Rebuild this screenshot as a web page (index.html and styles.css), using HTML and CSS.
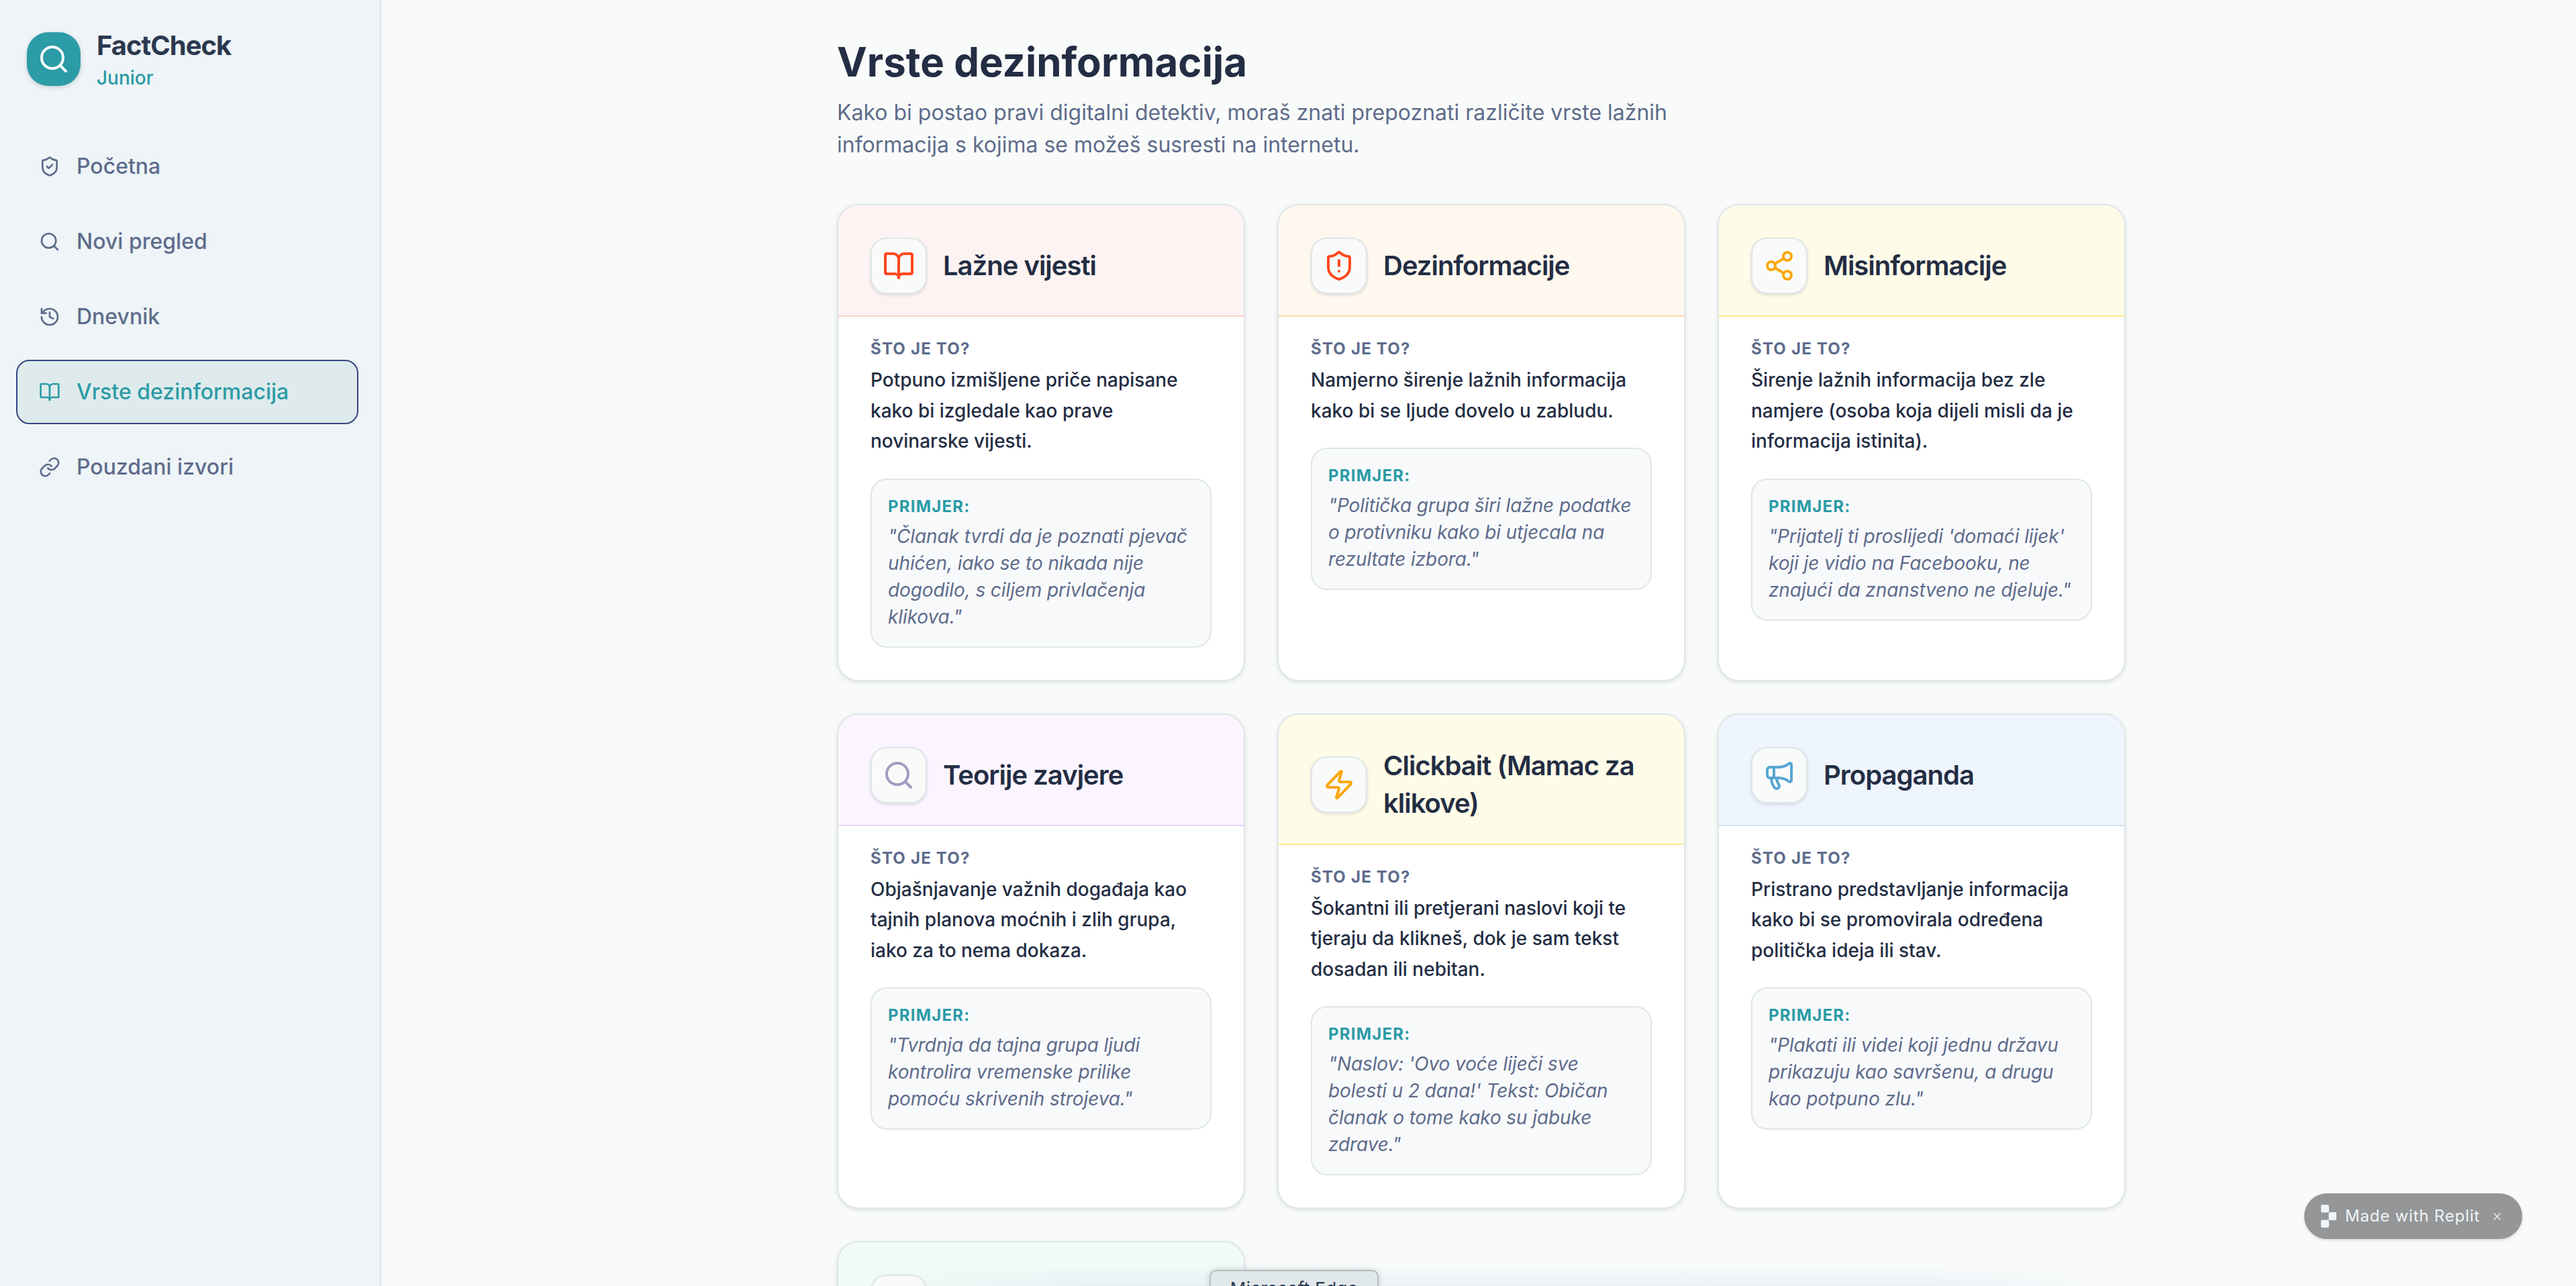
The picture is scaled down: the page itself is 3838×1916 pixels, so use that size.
FILE: index.html
```html
<!DOCTYPE html>
<html lang="hr">
<head>
    <meta charset="UTF-8">
    <meta name="viewport" content="width=device-width, initial-scale=1.0">
    <title>FactCheck Junior</title>

    <link rel="stylesheet" href="styles.css">
</head>
<body>
    <!-- icons -->
    <svg class="sprite">
        <symbol id="search" viewBox="0 0 24 24"><circle cx="11" cy="11" r="8"/><path d="m21 21-4.3-4.3"/></symbol>
        <symbol id="shield-check" viewBox="0 0 24 24"><path d="M20 13c0 5-3.5 7.5-7.66 8.95a1 1 0 0 1-.67-.01C7.5 20.5 4 18 4 13V6a1 1 0 0 1 1-1c2 0 4.5-1.2 6.24-2.72a1.17 1.17 0 0 1 1.52 0C14.51 3.81 17 5 19 5a1 1 0 0 1 1 1z"/><path d="m9 12 2 2 4-4"/></symbol>
        <symbol id="shield-alert" viewBox="0 0 24 24"><path d="M20 13c0 5-3.5 7.5-7.66 8.95a1 1 0 0 1-.67-.01C7.5 20.5 4 18 4 13V6a1 1 0 0 1 1-1c2 0 4.5-1.2 6.24-2.72a1.17 1.17 0 0 1 1.52 0C14.51 3.81 17 5 19 5a1 1 0 0 1 1 1z"/><path d="M12 8v4"/><path d="M12 16h.01"/></symbol>
        <symbol id="history" viewBox="0 0 24 24"><path d="M3 12a9 9 0 1 0 9-9 9.75 9.75 0 0 0-6.74 2.74L3 8"/><path d="M3 3v5h5"/><path d="M12 7v5l4 2"/></symbol>
        <symbol id="book" viewBox="0 0 24 24"><path d="M12 7v14"/><path d="M3 18a1 1 0 0 1-1-1V4a1 1 0 0 1 1-1h5a4 4 0 0 1 4 4 4 4 0 0 1 4-4h5a1 1 0 0 1 1 1v13a1 1 0 0 1-1 1h-6a3 3 0 0 0-3 3 3 3 0 0 0-3-3z"/></symbol>
        <symbol id="link" viewBox="0 0 24 24"><path d="M10 13a5 5 0 0 0 7.54.54l3-3a5 5 0 0 0-7.07-7.07l-1.72 1.71"/><path d="M14 11a5 5 0 0 0-7.54-.54l-3 3a5 5 0 0 0 7.07 7.07l1.71-1.71"/></symbol>
        <symbol id="share" viewBox="0 0 24 24"><circle cx="18" cy="5" r="3"/><circle cx="6" cy="12" r="3"/><circle cx="18" cy="19" r="3"/><path d="m8.59 13.51 6.83 3.98"/><path d="m15.41 6.51-6.82 3.98"/></symbol>
        <symbol id="zap" viewBox="0 0 24 24"><path d="M4 14a1 1 0 0 1-.78-1.63l9.9-10.2a.5.5 0 0 1 .86.46l-1.92 6.02A1 1 0 0 0 13 10h7a1 1 0 0 1 .78 1.63l-9.9 10.2a.5.5 0 0 1-.86-.46l1.92-6.02A1 1 0 0 0 11 14z"/></symbol>
        <symbol id="megaphone" viewBox="0 0 24 24"><path d="M11 6a13 13 0 0 0 8.4-2.8A1 1 0 0 1 21 4v12a1 1 0 0 1-1.6.8A13 13 0 0 0 11 14H5a2 2 0 0 1-2-2V8a2 2 0 0 1 2-2z"/><path d="M6 14a12 12 0 0 0 2.4 7.2 2 2 0 0 0 3.2-2.4A8 8 0 0 1 10 14"/><path d="M8 6v8"/></symbol>
    </svg>

    <div class="layout">
        <aside class="sidebar">
            <div class="brand">
                <div class="brand-logo"><svg class="icon"><use href="#search"/></svg></div>
                <div>
                    <h2 class="brand-name">FactCheck</h2>
                    <p class="brand-sub">Junior</p>
                </div>
            </div>
            <ul class="menu">
                <li><a><svg class="icon"><use href="#shield-check"/></svg>Početna</a></li>
                <li><a><svg class="icon"><use href="#search"/></svg>Novi pregled</a></li>
                <li><a><svg class="icon"><use href="#history"/></svg>Dnevnik</a></li>
                <li><a class="active"><svg class="icon"><use href="#book"/></svg>Vrste dezinformacija</a></li>
                <li><a><svg class="icon"><use href="#link"/></svg>Pouzdani izvori</a></li>
            </ul>
        </aside>

        <main class="main">
            <div class="container">
                <h1>Vrste dezinformacija</h1>
                <p class="intro">Kako bi postao pravi digitalni detektiv, moraš znati prepoznati različite vrste lažnih informacija s kojima se možeš susresti na internetu.</p>

                <div class="grid">
                    <div class="card red">
                        <div class="card-head">
                            <div class="tile"><svg class="icon"><use href="#book"/></svg></div>
                            <h3>Lažne vijesti</h3>
                        </div>
                        <div class="card-body">
                            <h4>Što je to?</h4>
                            <p>Potpuno izmišljene priče napisane kako bi izgledale kao prave novinarske vijesti.</p>
                            <div class="example">
                                <h4>Primjer:</h4>
                                <p>"Članak tvrdi da je poznati pjevač uhićen, iako se to nikada nije dogodilo, s ciljem privlačenja klikova."</p>
                            </div>
                        </div>
                    </div>
                    <div class="card orange">
                        <div class="card-head">
                            <div class="tile"><svg class="icon"><use href="#shield-alert"/></svg></div>
                            <h3>Dezinformacije</h3>
                        </div>
                        <div class="card-body">
                            <h4>Što je to?</h4>
                            <p>Namjerno širenje lažnih informacija kako bi se ljude dovelo u zabludu.</p>
                            <div class="example">
                                <h4>Primjer:</h4>
                                <p>"Politička grupa širi lažne podatke o protivniku kako bi utjecala na rezultate izbora."</p>
                            </div>
                        </div>
                    </div>
                    <div class="card yellow">
                        <div class="card-head">
                            <div class="tile"><svg class="icon"><use href="#share"/></svg></div>
                            <h3>Misinformacije</h3>
                        </div>
                        <div class="card-body">
                            <h4>Što je to?</h4>
                            <p>Širenje lažnih informacija bez zle namjere (osoba koja dijeli misli da je informacija istinita).</p>
                            <div class="example">
                                <h4>Primjer:</h4>
                                <p>"Prijatelj ti proslijedi 'domaći lijek' koji je vidio na Facebooku, ne znajući da znanstveno ne djeluje."</p>
                            </div>
                        </div>
                    </div>
                    <div class="card purple">
                        <div class="card-head">
                            <div class="tile"><svg class="icon"><use href="#search"/></svg></div>
                            <h3>Teorije zavjere</h3>
                        </div>
                        <div class="card-body">
                            <h4>Što je to?</h4>
                            <p>Objašnjavanje važnih događaja kao tajnih planova moćnih i zlih grupa, iako za to nema dokaza.</p>
                            <div class="example">
                                <h4>Primjer:</h4>
                                <p>"Tvrdnja da tajna grupa ljudi kontrolira vremenske prilike pomoću skrivenih strojeva."</p>
                            </div>
                        </div>
                    </div>
                    <div class="card yellow">
                        <div class="card-head">
                            <div class="tile"><svg class="icon"><use href="#zap"/></svg></div>
                            <h3>Clickbait (Mamac za klikove)</h3>
                        </div>
                        <div class="card-body">
                            <h4>Što je to?</h4>
                            <p>Šokantni ili pretjerani naslovi koji te tjeraju da klikneš, dok je sam tekst dosadan ili nebitan.</p>
                            <div class="example">
                                <h4>Primjer:</h4>
                                <p>"Naslov: 'Ovo voće liječi sve bolesti u 2 dana!' Tekst: Običan članak o tome kako su jabuke zdrave."</p>
                            </div>
                        </div>
                    </div>
                    <div class="card blue">
                        <div class="card-head">
                            <div class="tile"><svg class="icon"><use href="#megaphone"/></svg></div>
                            <h3>Propaganda</h3>
                        </div>
                        <div class="card-body">
                            <h4>Što je to?</h4>
                            <p>Pristrano predstavljanje informacija kako bi se promovirala određena politička ideja ili stav.</p>
                            <div class="example">
                                <h4>Primjer:</h4>
                                <p>"Plakati ili videi koji jednu državu prikazuju kao savršenu, a drugu kao potpuno zlu."</p>
                            </div>
                        </div>
                    </div>
                    <div class="card green">
                        <div class="card-head">
                            <div class="tile"></div>
                        </div>
                    </div>
                </div>
            </div>
        </main>
    </div>

    <div class="dock-shade"></div>
    <div class="tooltip">Microsoft Edge</div>

    <div class="replit">
        <svg class="replit-logo" viewBox="0 0 23 34"><rect x="0" y="0" width="12" height="11.5" rx="2"/><rect x="11.5" y="11" width="11.5" height="12" rx="2"/><rect x="0" y="22.5" width="12" height="11.5" rx="2"/></svg>
        <span>Made with Replit</span>
        <svg class="replit-close" viewBox="0 0 10 10"><path d="M0.5 0.5l9 9M9.5 0.5l-9 9"/></svg>
    </div>
</body>
</html>
```
FILE: styles.css
```css
* {
    box-sizing: border-box;
    margin: 0;
    padding: 0;
}
body {
    height: 1916px;
    overflow: hidden;
    font-family: Inter, "Noto Sans", sans-serif;
    font-size: 32px;
    line-height: 48px;
    color: #232d43;
    background: #f9fbfa;
}
.sprite {
    display: none;
}
.icon {
    display: block;
    flex: none;
    width: 32px;
    height: 32px;
    fill: none;
    stroke: currentColor;
    stroke-width: 2;
    stroke-linecap: round;
    stroke-linejoin: round;
}
.layout {
    display: flex;
    height: 1916px;
    margin-right: -8px;
    overflow: hidden;
}

/* sidebar */
.sidebar {
    flex: none;
    width: 568px;
    padding: 40px 32px 0 24px;
    background: #eef4f7;
    border-right: 2px solid #dfe6e8;
}
.brand {
    display: flex;
    align-items: center;
    gap: 24px;
    padding-left: 16px;
    margin-bottom: 64px;
}
.brand-logo {
    display: flex;
    align-items: center;
    justify-content: center;
    width: 80px;
    height: 80px;
    border-radius: 32px;
    color: #fff;
    background: #2b9ba6;
    box-shadow: 0 2px 6px rgba(35, 45, 67, .2);
}
.brand-logo .icon {
    width: 48px;
    height: 48px;
}
.brand-name {
    font-size: 40px;
    font-weight: 700;
    line-height: 56px;
    letter-spacing: -1px;
    color: #2c384f;
}
.brand-sub {
    font-size: 28px;
    font-weight: 500;
    line-height: 40px;
    color: #2b9ba6;
}
.menu {
    display: flex;
    flex-direction: column;
    gap: 16px;
    list-style: none;
}
.menu a {
    display: flex;
    align-items: center;
    gap: 24px;
    height: 96px;
    padding: 0 32px;
    border: 2px solid transparent;
    border-radius: 20px;
    font-weight: 500;
    color: #5e6c8b;
}
.menu a.active {
    color: #2b9ba6;
    background: #dfeaec;
    border-color: #354583;
}

/* content */
.main {
    flex: 1;
    padding-top: 56px;
}
.container {
    width: 1920px;
    margin: 0 auto;
}
h1 {
    font-size: 60px;
    font-weight: 700;
    line-height: 72px;
}
.intro {
    width: 1344px;
    margin: 16px 0 64px;
    color: #5e6c8b;
}
.grid {
    display: grid;
    grid-template-columns: repeat(3, 1fr);
    gap: 48px;
}
.card {
    overflow: hidden;
    border: 2px solid #dfe6e8;
    border-radius: 32px;
    background: #fff;
    box-shadow: 0 2px 6px rgba(35, 45, 67, .12);
}
.card-head {
    display: flex;
    align-items: center;
    gap: 24px;
    padding: 48px 48px 32px;
    border-bottom: 2px solid;
}
.tile {
    flex: none;
    width: 84px;
    height: 84px;
    padding: 16px;
    border: 2px solid #dfe6e8;
    border-radius: 24px;
    background: #f9fbfa;
    box-shadow: 0 2px 4px rgba(35, 45, 67, .14);
}
.tile .icon {
    width: 48px;
    height: 48px;
}
.card h3 {
    font-size: 40px;
    font-weight: 600;
    line-height: 56px;
    letter-spacing: -1px;
}
.card-body {
    padding: 32px 48px 48px;
}
.card h4 {
    margin-bottom: 8px;
    font-size: 24px;
    font-weight: 700;
    line-height: 32px;
    letter-spacing: 1.2px;
    text-transform: uppercase;
    color: #5e6c8b;
}
.card-body p {
    font-size: 28px;
    font-weight: 500;
    line-height: 45.5px;
}
.example {
    margin-top: 32px;
    padding: 24px;
    border: 2px solid #dfe6e8;
    border-radius: 24px;
    background: #f8f9fb;
}
.card .example h4 {
    color: #2b9ba6;
}
.card .example p {
    font-weight: 400;
    font-style: italic;
    line-height: 40px;
    letter-spacing: -.1px;
    color: #5e6c8b;
}
.red .card-head {
    background: #fdf3f2;
    border-color: #fdd1c2;
}
.red .tile,
.orange .tile {
    color: #ff4820;
}
.orange .card-head {
    background: #fff8ee;
    border-color: #ffd8a4;
}
.yellow .card-head {
    background: #fefbe8;
    border-color: #feeb8c;
}
.yellow .tile {
    color: #fba70a;
}
.purple .card-head {
    background: #faf5ff;
    border-color: #e7d4fd;
}
.purple .tile {
    color: #a09cc0;
}
.blue .card-head {
    background: #eff5fe;
    border-color: #d5dfe8;
}
.blue .tile {
    color: #58a5d3;
}
.green .card-head {
    background: #f0faf6;
    border-color: #cfeee0;
}

/* dock label and its shadow at the bottom edge */
.dock-shade {
    position: absolute;
    left: 1340px;
    top: 1886px;
    width: 1800px;
    height: 30px;
    background: linear-gradient(rgba(225, 232, 245, 0), rgba(225, 232, 245, .5));
    -webkit-mask-image: linear-gradient(90deg, transparent, #000 15%, #000 85%, transparent);
    mask-image: linear-gradient(90deg, transparent, #000 15%, #000 85%, transparent);
}
.tooltip {
    position: absolute;
    left: 1802px;
    top: 1892px;
    width: 252px;
    height: 60px;
    border: 2px solid #b5bdc2;
    border-radius: 10px;
    text-align: center;
    font-size: 26px;
    line-height: 52px;
    letter-spacing: .3px;
    color: #2c384f;
    background: #e0e8ea;
    box-shadow: 0 0 8px rgba(35, 45, 67, .2);
}

/* replit badge */
.replit {
    position: absolute;
    right: 80px;
    bottom: 70px;
    display: flex;
    align-items: center;
    width: 325px;
    height: 68px;
    padding-left: 25px;
    border-radius: 34px;
    font-size: 24px;
    letter-spacing: .8px;
    color: #eef4f7;
    background: #959698;
    box-shadow: 0 2px 4px rgba(35, 45, 67, .14);
}
.replit-logo {
    width: 23px;
    height: 34px;
    margin-right: 13px;
    fill: #eef4f7;
}
.replit-close {
    width: 11px;
    height: 11px;
    margin-left: 20px;
    stroke: #e4e8ea;
    stroke-width: 1.4;
}
```
